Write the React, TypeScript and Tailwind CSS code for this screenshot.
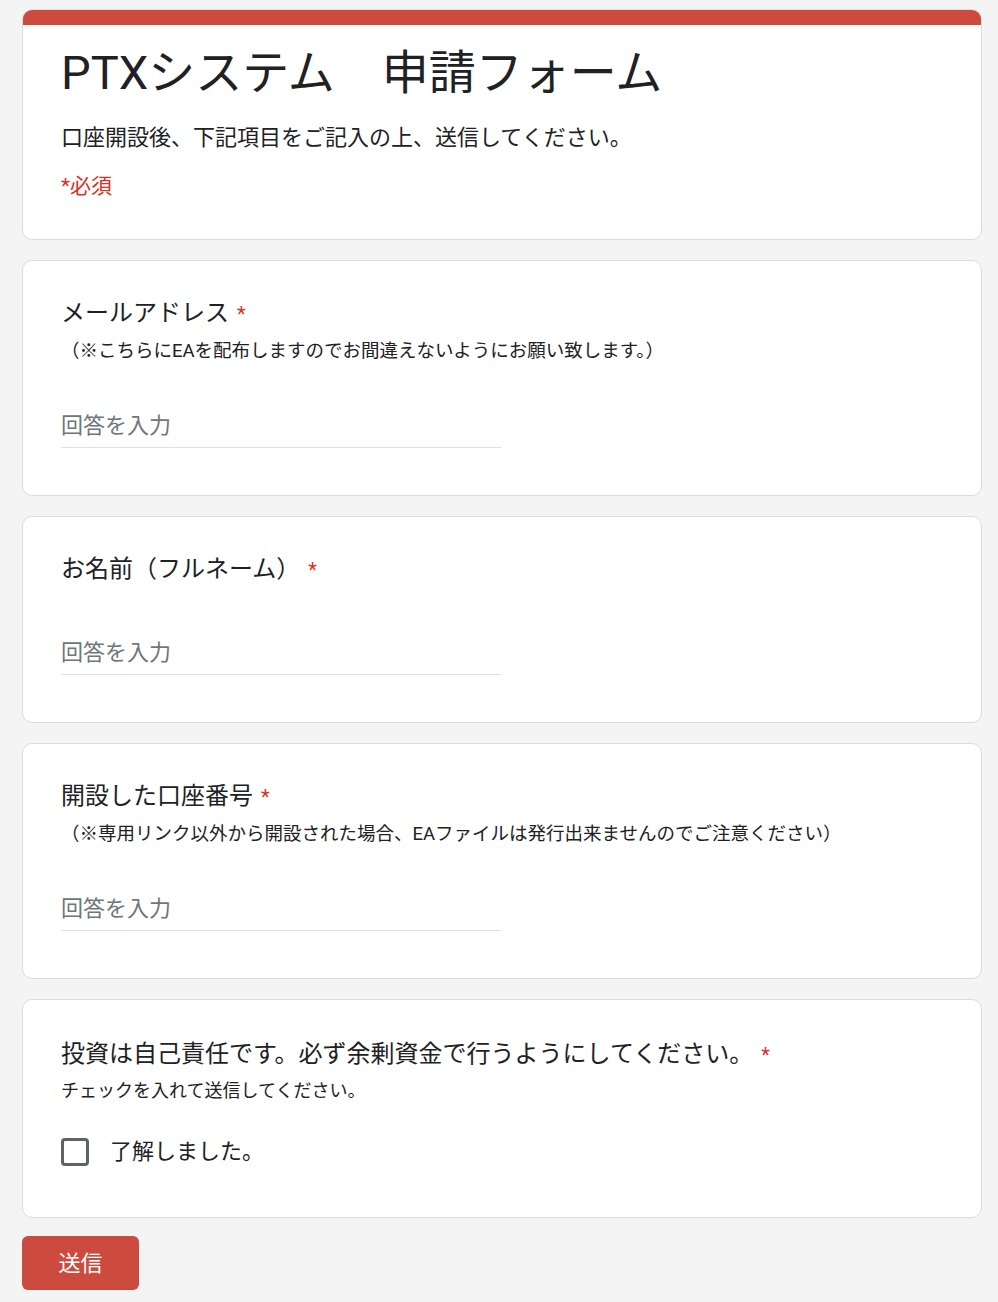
const FONT = "font-['Roboto','Noto_Sans_CJK_JP',sans-serif]";

type Question = {
  title: string;
  note?: string;
};

const questions: Question[] = [
  {
    title: "メールアドレス",
    note: "（※こちらにEAを配布しますのでお間違えないようにお願い致します。）",
  },
  { title: "お名前（フルネーム）" },
  {
    title: "開設した口座番号",
    note: "（※専用リンク以外から開設された場合、EAファイルは発行出来ませんのでご注意ください）",
  },
];

function Required() {
  return <span className="ml-[8px] text-[20px] text-[#d93025]">*</span>;
}

function TextQuestion({ q }: { q: Question }) {
  return (
    <div className="rounded-[10px] border border-[#dadce0] bg-white px-[38px] pt-[36px] pb-[47px]">
      <div className="text-[24px] leading-[32px] text-[#202124]">
        {q.title}
        <Required />
      </div>
      {q.note && (
        <div className="mt-[9px] text-[18.5px] leading-[24px] text-[#202124]">{q.note}</div>
      )}
      <div className={q.note ? "mt-[48px]" : "mt-[52px]"}>
        <div className="w-[440px] border-b border-[#e0e0e0] pb-[6px] text-[22px] leading-[30px] text-[#70757a]">
          回答を入力
        </div>
      </div>
    </div>
  );
}

export default function App() {
  return (
    <div className={`min-h-screen bg-[#f4f4f4] ${FONT}`}>
      <div className="flex w-[982px] flex-col gap-[20px] pt-[9px] pl-[22px] pb-[13px]">
        <div className="overflow-hidden rounded-[10px] border border-[#dadce0] bg-white">
          <div className="h-[15px] bg-[#cc4b3e]" />
          <div className="px-[38px] pt-[20px] pb-[38px]">
            <h1 className="text-[47px] leading-[56px] text-[#202124]">PTXシステム　申請フォーム</h1>
            <p className="mt-[22px] text-[22px] leading-[30px] text-[#202124]">
              口座開設後、下記項目をご記入の上、送信してください。
            </p>
            <p className="mt-[18px] text-[21px] leading-[30px] text-[#d93025]">*必須</p>
          </div>
        </div>

        {questions.map((q) => (
          <TextQuestion key={q.title} q={q} />
        ))}

        <div className="rounded-[10px] border border-[#dadce0] bg-white px-[38px] pt-[38px] pb-[50px]">
          <div className="text-[24px] leading-[32px] text-[#202124]">
            投資は自己責任です。必ず余剰資金で行うようにしてください。
            <Required />
          </div>
          <div className="mt-[8px] text-[18px] leading-[24px] text-[#202124]">
            チェックを入れて送信してください。
          </div>
          <label className="mt-[34px] flex items-center gap-[21px]">
            <span className="h-[28px] w-[28px] rounded-[4px] border-[3px] border-[#5f6368]" />
            <span className="text-[22px] leading-[30px] text-[#202124]">了解しました。</span>
          </label>
        </div>

        <div className="-mt-[2px]">
          <button className="h-[54px] w-[117px] rounded-[6px] bg-[#cc4b3e] text-[22px] text-white">
            送信
          </button>
        </div>
      </div>
    </div>
  );
}
